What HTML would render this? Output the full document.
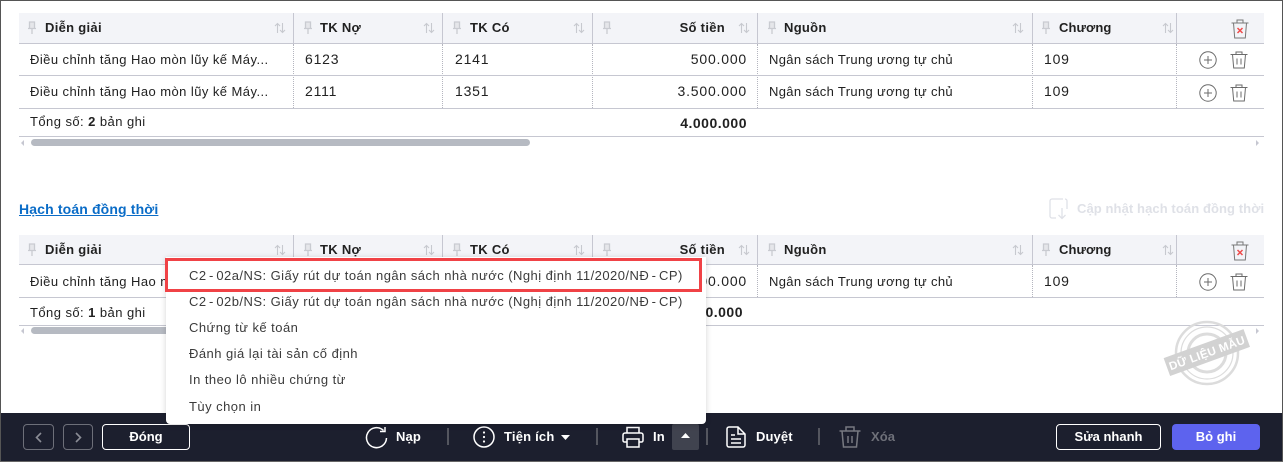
<!DOCTYPE html>
<html lang="vi"><head><meta charset="utf-8"><title>Hạch toán</title>
<style>
html,body{margin:0;padding:0;background:#fff}
body{width:1283px;height:462px;overflow:hidden;position:relative;font-family:"Liberation Sans",sans-serif;font-size:13px;color:#212121}
.a{position:absolute;white-space:nowrap}
.t{line-height:16px;letter-spacing:.3px}
.l{letter-spacing:.44px}
.n{font-size:14px;letter-spacing:.8px}
.tot{font-size:14px;letter-spacing:.5px;font-weight:bold}
.b{font-weight:bold}
.hd{background:#f3f4f8;left:19px;width:1245px;border-bottom:1px solid #c6c7d1;box-sizing:border-box}
.ln{left:19px;width:1245px;height:1px;background:#c6c7d1}
.v{width:1px;background:#c6c7d1}
.d{width:0;border-left:1px dotted #b4b5bf}
svg{position:absolute;overflow:visible;fill:none}
.mi{left:189px;color:#3b3b3b;letter-spacing:.46px;line-height:16px}
.mi i{font-style:normal;margin:0 2.500px}
.f{color:#fff;font-weight:bold;line-height:16px;letter-spacing:.1px}
.btn{box-sizing:border-box;border:1px solid #fff;border-radius:4px;height:26px;top:424px;color:#fff;font-weight:bold;text-align:center;line-height:24px}
.sep{width:2px;height:17px;top:428px;background:#54565f}
</style></head><body>
<svg width="0" height="0" style="position:absolute"><defs>
<symbol id="pin" viewBox="0 0 10 14"><path d="M2.500 1h5v6.500h-5zM1 7.500h8M5 7.500V13" stroke="#c9cbd1" stroke-width="1.300" fill="#e5e6ea"/></symbol>
<symbol id="sort" viewBox="0 0 12 12"><path d="M3.500 11V1.500M1 4l2.500-2.500L6 4M8.500 1v9.500M6 8l2.500 2.500L11 8" stroke="#c7c9cf" stroke-width="1.100"/></symbol>
<symbol id="plus" viewBox="0 0 18 18"><circle cx="9" cy="9" r="8.200" stroke="#6b6b6b" stroke-width="1"/><path d="M9 5v8M5 9h8" stroke="#6b6b6b" stroke-width="1"/></symbol>
<symbol id="trash" viewBox="0 0 18 18"><path d="M.5 3.500h17M6 3.500V1h6v2.500M2.500 3.500l1.200 13.500h10.600l1.200-13.500M7 7.500v6M11 7.500v6" stroke="#6b6b6b" stroke-width="1"/></symbol>
<symbol id="trashx" viewBox="0 0 18 20"><path d="M.5 4h17M6 4V1h6v3M2.500 4l1.200 15h10.600l1.200-15" stroke="#777" stroke-width="1"/><path d="M6.500 9l5 5M11.500 9l-5 5" stroke="#ef4b4b" stroke-width="1.500"/></symbol>
</defs></svg>

<!-- outer frame -->
<div class="a" style="left:0;top:0;width:1283px;height:1px;background:#555"></div>
<div class="a" style="left:0;top:0;width:1px;height:462px;background:#555"></div>
<div class="a" style="left:1282px;top:0;width:1px;height:462px;background:#555"></div>

<!-- TABLE 1 -->
<div class="a hd" style="top:13px;height:31px"></div>
<div class="a v" style="left:293px;top:13px;height:30px"></div><div class="a v" style="left:442px;top:13px;height:30px"></div><div class="a v" style="left:592px;top:13px;height:30px"></div><div class="a v" style="left:757px;top:13px;height:30px"></div><div class="a v" style="left:1032px;top:13px;height:30px"></div><div class="a v" style="left:1176px;top:13px;height:30px"></div>
<div class="a d" style="left:293px;top:44px;height:64px"></div><div class="a d" style="left:442px;top:44px;height:64px"></div><div class="a d" style="left:592px;top:44px;height:64px"></div><div class="a d" style="left:757px;top:44px;height:64px"></div><div class="a d" style="left:1032px;top:44px;height:64px"></div><div class="a d" style="left:1176px;top:44px;height:64px"></div>
<div class="a ln" style="top:75px"></div><div class="a ln" style="top:108px"></div><div class="a ln" style="top:136px"></div>

<svg style="left:27px;top:21px" width="10" height="14"><use href="#pin"/></svg>
<svg style="left:303px;top:21px" width="10" height="14"><use href="#pin"/></svg>
<svg style="left:452px;top:21px" width="10" height="14"><use href="#pin"/></svg>
<svg style="left:602px;top:21px" width="10" height="14"><use href="#pin"/></svg>
<svg style="left:767px;top:21px" width="10" height="14"><use href="#pin"/></svg>
<svg style="left:1041px;top:21px" width="10" height="14"><use href="#pin"/></svg>
<svg style="left:274px;top:22px" width="12" height="12"><use href="#sort"/></svg>
<svg style="left:423px;top:22px" width="12" height="12"><use href="#sort"/></svg>
<svg style="left:573px;top:22px" width="12" height="12"><use href="#sort"/></svg>
<svg style="left:738px;top:22px" width="12" height="12"><use href="#sort"/></svg>
<svg style="left:1012px;top:22px" width="12" height="12"><use href="#sort"/></svg>
<svg style="left:1162px;top:22px" width="12" height="12"><use href="#sort"/></svg>

<div class="a t b" style="left:45px;top:20px">Diễn giải</div>
<div class="a t b" style="left:320px;top:20px">TK Nợ</div>
<div class="a t b" style="left:470px;top:20px">TK Có</div>
<div class="a t b" style="right:558px;top:20px">Số tiền</div>
<div class="a t b" style="left:784px;top:20px">Nguồn</div>
<div class="a t b" style="left:1059px;top:20px;letter-spacing:.1px">Chương</div>
<svg style="left:1231px;top:19px" width="18" height="20"><use href="#trashx"/></svg>

<div class="a t l" style="left:30px;top:52px">Điều chỉnh tăng Hao mòn lũy kế Máy...</div>
<div class="a t n" style="left:305px;top:51px">6123</div><div class="a t n" style="left:455px;top:51px">2141</div>
<div class="a t n" style="right:536px;top:51px">500.000</div>
<div class="a t" style="left:769px;top:52px;letter-spacing:.34px">Ngân sách Trung ương tự chủ</div>
<div class="a t n" style="left:1044px;top:51px">109</div>
<svg style="left:1199px;top:51px" width="18" height="18"><use href="#plus"/></svg>
<svg style="left:1230px;top:51px" width="18" height="18"><use href="#trash"/></svg>

<div class="a t l" style="left:30px;top:84px">Điều chỉnh tăng Hao mòn lũy kế Máy...</div>
<div class="a t n" style="left:305px;top:83px">2111</div><div class="a t n" style="left:455px;top:83px">1351</div>
<div class="a t n" style="right:536px;top:83px">3.500.000</div>
<div class="a t" style="left:769px;top:84px;letter-spacing:.34px">Ngân sách Trung ương tự chủ</div>
<div class="a t n" style="left:1044px;top:83px">109</div>
<svg style="left:1199px;top:84px" width="18" height="18"><use href="#plus"/></svg>
<svg style="left:1230px;top:84px" width="18" height="18"><use href="#trash"/></svg>

<div class="a t l" style="left:30px;top:114px">Tổng số: <span class="b">2</span> bản ghi</div>
<div class="a t tot" style="right:536px;top:115px">4.000.000</div>
<svg style="left:21px;top:140px" width="4" height="6"><path d="M3 0v6L0 3z" fill="#c6c7d1"/></svg>
<div class="a" style="left:31px;top:139px;width:499px;height:7px;border-radius:4px;background:#b6bac2"></div>
<svg style="left:1256px;top:140px" width="4" height="6"><path d="M0 0v6l3-3z" fill="#c6c7d1"/></svg>

<!-- link row -->
<div class="a b" style="left:19px;top:201px;color:#0a6cc7;text-decoration:underline;font-size:14px;line-height:17px;letter-spacing:.14px">Hạch toán đồng thời</div>
<svg style="left:1049px;top:198px" width="20" height="22"><path d="M14 1H3a2 2 0 0 0-2 2v15a2 2 0 0 0 2 2h4M16 1a2 2 0 0 1 2 2v8M13 10v10M9.500 17l3.500 3.500 3.500-3.500" stroke="#dfe1e7" stroke-width="1.300"/></svg>
<div class="a b t" style="left:1077px;top:201px;color:#dfe1e7;letter-spacing:.09px">Cập nhật hạch toán đồng thời</div>

<!-- TABLE 2 -->
<div class="a hd" style="top:235px;height:30px"></div>
<div class="a v" style="left:293px;top:235px;height:29px"></div><div class="a v" style="left:442px;top:235px;height:29px"></div><div class="a v" style="left:592px;top:235px;height:29px"></div><div class="a v" style="left:757px;top:235px;height:29px"></div><div class="a v" style="left:1032px;top:235px;height:29px"></div><div class="a v" style="left:1176px;top:235px;height:29px"></div>
<div class="a d" style="left:293px;top:265px;height:32px"></div><div class="a d" style="left:442px;top:265px;height:32px"></div><div class="a d" style="left:592px;top:265px;height:32px"></div><div class="a d" style="left:757px;top:265px;height:32px"></div><div class="a d" style="left:1032px;top:265px;height:32px"></div><div class="a d" style="left:1176px;top:265px;height:32px"></div>
<div class="a ln" style="top:297px"></div><div class="a ln" style="top:325px"></div>

<svg style="left:27px;top:243px" width="10" height="14"><use href="#pin"/></svg>
<svg style="left:303px;top:243px" width="10" height="14"><use href="#pin"/></svg>
<svg style="left:452px;top:243px" width="10" height="14"><use href="#pin"/></svg>
<svg style="left:602px;top:243px" width="10" height="14"><use href="#pin"/></svg>
<svg style="left:767px;top:243px" width="10" height="14"><use href="#pin"/></svg>
<svg style="left:1041px;top:243px" width="10" height="14"><use href="#pin"/></svg>
<svg style="left:274px;top:244px" width="12" height="12"><use href="#sort"/></svg>
<svg style="left:423px;top:244px" width="12" height="12"><use href="#sort"/></svg>
<svg style="left:573px;top:244px" width="12" height="12"><use href="#sort"/></svg>
<svg style="left:738px;top:244px" width="12" height="12"><use href="#sort"/></svg>
<svg style="left:1012px;top:244px" width="12" height="12"><use href="#sort"/></svg>
<svg style="left:1162px;top:244px" width="12" height="12"><use href="#sort"/></svg>

<div class="a t b" style="left:45px;top:242px">Diễn giải</div>
<div class="a t b" style="left:320px;top:242px">TK Nợ</div>
<div class="a t b" style="left:470px;top:242px">TK Có</div>
<div class="a t b" style="right:558px;top:242px">Số tiền</div>
<div class="a t b" style="left:784px;top:242px">Nguồn</div>
<div class="a t b" style="left:1059px;top:242px;letter-spacing:.1px">Chương</div>
<svg style="left:1231px;top:241px" width="18" height="20"><use href="#trashx"/></svg>

<div class="a t l" style="left:30px;top:274px">Điều chỉnh tăng Hao mòn lũy kế Máy...</div>
<div class="a t n" style="right:536px;top:273px">500.000</div>
<div class="a t" style="left:769px;top:274px;letter-spacing:.34px">Ngân sách Trung ương tự chủ</div>
<div class="a t n" style="left:1044px;top:273px">109</div>
<svg style="left:1199px;top:273px" width="18" height="18"><use href="#plus"/></svg>
<svg style="left:1230px;top:273px" width="18" height="18"><use href="#trash"/></svg>

<div class="a t l" style="left:30px;top:305px">Tổng số: <span class="b">1</span> bản ghi</div>
<div class="a t tot" style="right:540px;top:304px">500.000</div>
<svg style="left:21px;top:328px" width="4" height="6"><path d="M3 0v6L0 3z" fill="#c6c7d1"/></svg>
<div class="a" style="left:31px;top:327px;width:300px;height:7px;border-radius:4px;background:#b6bac2"></div>
<svg style="left:1256px;top:328px" width="4" height="6"><path d="M0 0v6l3-3z" fill="#c6c7d1"/></svg>

<!-- stamp -->
<svg style="left:1165px;top:317px" width="84" height="76" viewBox="0 0 84 76">
<g stroke="#dcdcdc" fill="none"><circle cx="42" cy="36" r="31" stroke-width="2.500"/><circle cx="42" cy="36" r="26" stroke-width="1.200"/><circle cx="42" cy="36" r="19" stroke-width="3"/></g>
<g transform="rotate(-20 42 36)"><rect x="-0.500" y="26" width="85" height="19" fill="#d2d2d2"/>
<text x="42" y="40" text-anchor="middle" font-family="Liberation Sans" font-weight="bold" font-size="11.500" letter-spacing=".3" fill="#fff">DỮ LIỆU MẪU</text></g></svg>

<!-- FOOTER -->
<div class="a" style="left:1px;top:413px;width:1281px;height:48px;background:#1c1f2e"></div>
<div class="a" style="left:0;top:461px;width:1283px;height:1px;background:#666"></div>
<div class="a" style="left:23px;top:424px;width:31px;height:26px;box-sizing:border-box;border:1px solid #6d6f79;border-radius:4px"></div>
<svg style="left:35px;top:432px" width="8" height="11"><path d="M6 1L1.500 5.500 6 10" stroke="#8a8c95" stroke-width="1.600"/></svg>
<div class="a" style="left:63px;top:424px;width:30px;height:26px;box-sizing:border-box;border:1px solid #6d6f79;border-radius:4px"></div>
<svg style="left:74px;top:432px" width="8" height="11"><path d="M2 1l4.500 4.500L2 10" stroke="#8a8c95" stroke-width="1.600"/></svg>
<div class="a btn" style="left:102px;width:88px">Đóng</div>

<svg style="left:365px;top:426px" width="23" height="23" viewBox="0 0 23 23"><path d="M18.500 4.500A10 10 0 1 0 21.500 12" stroke="#fff" stroke-width="1.500"/><path d="M20 1v4.500h-5" stroke="#fff" stroke-width="1.500"/></svg>
<div class="a f" style="left:396px;top:429px">Nạp</div>
<div class="a sep" style="left:447px"></div>
<svg style="left:473px;top:426px" width="22" height="22" viewBox="0 0 22 22"><circle cx="11" cy="11" r="10" stroke="#fff" stroke-width="1.500"/><circle cx="11" cy="6.500" r="1.100" fill="#fff"/><circle cx="11" cy="11" r="1.100" fill="#fff"/><circle cx="11" cy="15.500" r="1.100" fill="#fff"/></svg>
<div class="a f" style="left:504px;top:429px;letter-spacing:.2px">Tiện ích</div>
<svg style="left:561px;top:435px" width="9" height="5"><path d="M0 0h9L4.500 5z" fill="#fff"/></svg>
<div class="a sep" style="left:596px"></div>
<svg style="left:622px;top:426px" width="22" height="22" viewBox="0 0 22 22"><path d="M5 7V1.500h12V7M5 16H2.500A1.500 1.500 0 0 1 1 14.500V9a2 2 0 0 1 2-2h16a2 2 0 0 1 2 2v5.500a1.500 1.500 0 0 1-1.500 1.500H17M5 13h12v8H5z" stroke="#fff" stroke-width="1.500"/></svg>
<div class="a f" style="left:653px;top:429px">In</div>
<div class="a" style="left:672px;top:424px;width:27px;height:26px;background:#40434f;border-radius:2px"></div>
<svg style="left:681px;top:433px" width="9" height="5"><path d="M0 5h9L4.500 0z" fill="#fff"/></svg>
<div class="a sep" style="left:706px"></div>
<svg style="left:726px;top:426px" width="20" height="22" viewBox="0 0 20 22"><path d="M12 1H3a2 2 0 0 0-2 2v16a2 2 0 0 0 2 2h14a2 2 0 0 0 2-2V8zM12 1v7h7M5 9h4M5 13h10M5 17h10" stroke="#fff" stroke-width="1.500"/></svg>
<div class="a f" style="left:756px;top:429px">Duyệt</div>
<div class="a sep" style="left:818px"></div>
<svg style="left:839px;top:426px" width="22" height="22" viewBox="0 0 22 22"><path d="M.5 5h21M7 5V1h8v4M3 5l1.500 16h13L19 5M9 10v7M13 10v7" stroke="#777981" stroke-width="1.500"/></svg>
<div class="a f" style="left:871px;top:429px;color:#6e7079">Xóa</div>

<div class="a btn" style="left:1056px;width:105px">Sửa nhanh</div>
<div class="a btn" style="left:1172px;width:88px;border:0;background:#5d63ee;line-height:26px">Bỏ ghi</div>

<!-- DROPDOWN -->
<div class="a" style="left:166px;top:257px;width:540px;height:167px;background:#fff;border-radius:0 0 4px 4px;box-shadow:0 1px 6px rgba(0,0,0,.18)"></div>
<div class="a" style="left:165px;top:258px;width:537px;height:34px;box-sizing:border-box;border:3px solid #f04246"></div>
<div class="a mi" style="top:268px">C2<i>-</i>02a/NS: Giấy rút dự toán ngân sách nhà nước (Nghị định 11/2020/NĐ<i>-</i>CP)</div>
<div class="a mi" style="top:294px">C2<i>-</i>02b/NS: Giấy rút dự toán ngân sách nhà nước (Nghị định 11/2020/NĐ<i>-</i>CP)</div>
<div class="a mi" style="top:320px">Chứng từ kế toán</div>
<div class="a mi" style="top:346px">Đánh giá lại tài sản cố định</div>
<div class="a mi" style="top:372px">In theo lô nhiều chứng từ</div>
<div class="a mi" style="top:399px">Tùy chọn in</div>
</body></html>
